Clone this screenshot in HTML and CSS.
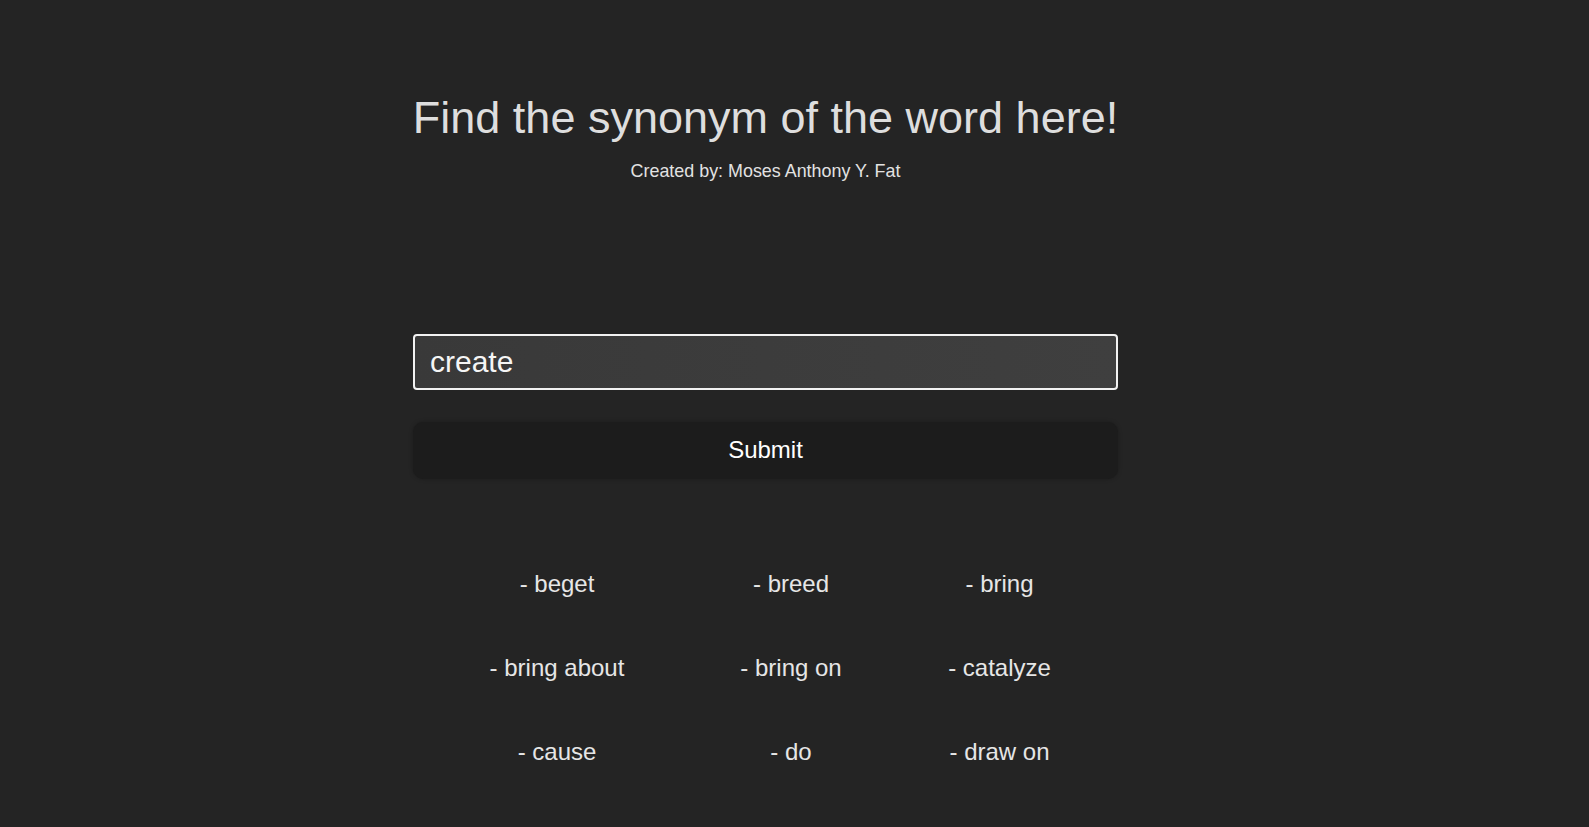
FILE: index.html
```html
<!DOCTYPE html>
<html lang="en">
<head>
<meta charset="utf-8">
<title>Synonym Finder</title>
<link rel="stylesheet" href="styles.css">
</head>
<body>
<div class="page">
  <main class="app">
    <header class="head">
      <h1 class="title">Find the synonym of the word here!</h1>
      <p class="credit">Created by: Moses Anthony Y. Fat</p>
    </header>
    <form class="search">
      <input class="word" type="text" value="create">
      <button class="submit" type="button">Submit</button>
    </form>
    <ul class="results">
      <li>- beget</li>
      <li>- breed</li>
      <li>- bring</li>
      <li>- bring about</li>
      <li>- bring on</li>
      <li>- catalyze</li>
      <li>- cause</li>
      <li>- do</li>
      <li>- draw on</li>
    </ul>
  </main>
</div>
</body>
</html>
```

FILE: styles.css
```css
html, body {
  margin: 0;
  padding: 0;
  background: #242424;
  height: 100%;
}
body {
  font-family: "Liberation Sans", Arial, sans-serif;
  color: #e4e4e4;
}
.page {
  display: flex;
  justify-content: center;
  padding-right: 58px;
}
.app {
  width: 705px;
  display: flex;
  flex-direction: column;
}
.head {
  padding-top: 91.5px;
  text-align: center;
}
.title {
  margin: 0 -20px;
  font-size: 45px;
  line-height: 52px;
  font-weight: 400;
  white-space: nowrap;
  color: #dedede;
}
.credit {
  margin: 17.5px 0 0;
  font-size: 17.9px;
  line-height: 20px;
  color: #e2e2e2;
}
.search {
  margin-top: 153px;
  display: flex;
  flex-direction: column;
  gap: 31.5px;
}
.word {
  box-sizing: border-box;
  height: 56px;
  width: 100%;
  margin: 0;
  border: 2px solid #f2f2f2;
  border-radius: 4px;
  background: linear-gradient(90deg, #393939, #3f3f3f);
  color: #f5f5f5;
  font-family: "Liberation Sans", Arial, sans-serif;
  font-size: 30px;
  padding: 0 15px;
  outline: none;
}
.submit {
  height: 57px;
  width: 100%;
  border: none;
  border-radius: 10px;
  background: #1c1c1c;
  color: #ffffff;
  font-family: "Liberation Sans", Arial, sans-serif;
  font-size: 24px;
  box-shadow: 0 0 4px rgba(0,0,0,0.25);
}
.results {
  list-style: none;
  margin: 91.5px 0 0;
  padding: 0;
  display: grid;
  grid-template-columns: 288px 180px 1fr;
  row-gap: 56px;
  font-size: 24px;
  line-height: 28px;
  text-align: center;
  color: #e6e6e6;
}
```
